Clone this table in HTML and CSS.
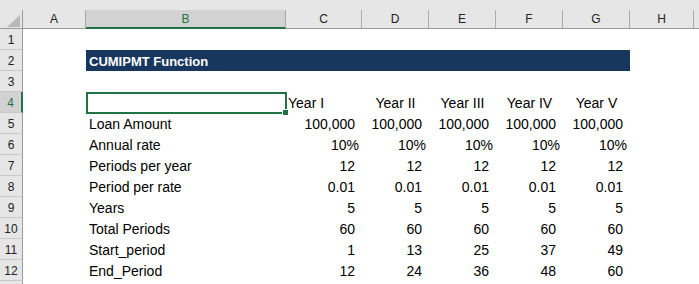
FILE: index.html
```html
<!DOCTYPE html>
<html>
<head>
<meta charset="utf-8">
<link rel="stylesheet" href="styles.css">
</head>
<body>
<div class="sheet">
  <div class="r hdr">
    <div class="ch corner"><span class="tri"></span></div>
    <div class="ch">A</div>
    <div class="ch sel">B</div>
    <div class="ch">C</div>
    <div class="ch">D</div>
    <div class="ch">E</div>
    <div class="ch">F</div>
    <div class="ch">G</div>
    <div class="ch">H</div>
    <div class="ch rest"></div>
  </div>

  <div class="r"><div class="rh">1</div></div>

  <div class="r"><div class="rh">2</div><div></div><div class="title">CUMIPMT Function</div></div>

  <div class="r"><div class="rh">3</div></div>

  <div class="r">
    <div class="rh rsel">4</div><div></div>
    <div class="c active"><span class="box"></span><span class="handle"></span></div>
    <div class="c l">Year I</div>
    <div class="c m">Year II</div>
    <div class="c m">Year III</div>
    <div class="c m">Year IV</div>
    <div class="c m">Year V</div>
  </div>

  <div class="r">
    <div class="rh">5</div><div></div><div class="c lab">Loan Amount</div>
    <div class="c n">100,000</div><div class="c n">100,000</div><div class="c n">100,000</div><div class="c n">100,000</div><div class="c n">100,000</div>
  </div>

  <div class="r">
    <div class="rh">6</div><div></div><div class="c lab">Annual rate</div>
    <div class="c p">10%</div><div class="c p">10%</div><div class="c p">10%</div><div class="c p">10%</div><div class="c p">10%</div>
  </div>

  <div class="r">
    <div class="rh">7</div><div></div><div class="c lab">Periods per year</div>
    <div class="c n">12</div><div class="c n">12</div><div class="c n">12</div><div class="c n">12</div><div class="c n">12</div>
  </div>

  <div class="r">
    <div class="rh">8</div><div></div><div class="c lab">Period per rate</div>
    <div class="c n">0.01</div><div class="c n">0.01</div><div class="c n">0.01</div><div class="c n">0.01</div><div class="c n">0.01</div>
  </div>

  <div class="r">
    <div class="rh">9</div><div></div><div class="c lab">Years</div>
    <div class="c n">5</div><div class="c n">5</div><div class="c n">5</div><div class="c n">5</div><div class="c n">5</div>
  </div>

  <div class="r">
    <div class="rh">10</div><div></div><div class="c lab">Total Periods</div>
    <div class="c n">60</div><div class="c n">60</div><div class="c n">60</div><div class="c n">60</div><div class="c n">60</div>
  </div>

  <div class="r">
    <div class="rh">11</div><div></div><div class="c lab">Start_period</div>
    <div class="c n">1</div><div class="c n">13</div><div class="c n">25</div><div class="c n">37</div><div class="c n">49</div>
  </div>

  <div class="r">
    <div class="rh">12</div><div></div><div class="c lab">End_Period</div>
    <div class="c n">12</div><div class="c n">24</div><div class="c n">36</div><div class="c n">48</div><div class="c n">60</div>
  </div>

  <div class="r"><div class="rh"></div></div>
</div>
</body>
</html>
```

FILE: styles.css
```css
html, body {
  margin: 0;
  padding: 0;
  background: #ffffff;
}

.sheet {
  width: 699px;
  height: 284px;
  overflow: hidden;
  font-family: "Liberation Sans", Arial, sans-serif;
  color: #000000;
}

.r {
  display: grid;
  grid-template-columns: 23px 63px 200px 76px 67px 67px 67px 67px 64px 1fr;
  height: 21px;
}

.hdr {
  height: 29px;
  padding-top: 10px;
  box-sizing: border-box;
  background: #e6e6e6;
}

.ch {
  box-sizing: border-box;
  height: 19px;
  border-right: 1px solid #ababab;
  border-bottom: 1px solid #9b9b9b;
  text-align: center;
  font-size: 12px;
  line-height: 19px;
  color: #222222;
}

.ch.corner {
  position: relative;
  border-right-color: #9b9b9b;
}

.tri {
  position: absolute;
  left: 7px;
  top: 5px;
  width: 13px;
  height: 12px;
  background: #b9b9b9;
  clip-path: polygon(100% 0, 100% 100%, 0 100%);
}

.ch.sel {
  background: #d2d2d2;
  border-bottom: 2px solid #217346;
  line-height: 18px;
  color: #217346;
}

.ch.rest {
  border-right: none;
}

.rh {
  box-sizing: border-box;
  height: 21px;
  background: #e6e6e6;
  border-right: 1px solid #9b9b9b;
  border-bottom: 1px solid #c8c8c8;
  text-align: center;
  font-size: 12px;
  line-height: 19px;
  padding-top: 2px;
  color: #222222;
}

.rh.rsel {
  background: #d2d2d2;
  border-right: 2px solid #217346;
  color: #217346;
}

.title {
  grid-column: 3 / 9;
  background: #17375e;
  color: #ffffff;
  font-weight: bold;
  font-size: 13px;
  line-height: 19px;
  padding: 2px 0 0 3px;
  white-space: nowrap;
}

.c {
  box-sizing: border-box;
  font-size: 14px;
  line-height: 20px;
  padding-top: 1px;
  height: 21px;
  white-space: nowrap;
}

.c.lab {
  padding-left: 3px;
}

.c.l {
  padding-left: 2px;
}

.c.m {
  text-align: center;
}

.c.n {
  text-align: right;
  padding-right: 7px;
}

.c.p {
  text-align: right;
  padding-right: 3px;
}

.c.active {
  position: relative;
}

.box {
  position: absolute;
  left: 0;
  top: 0;
  width: 201px;
  height: 22px;
  box-sizing: border-box;
  border: 2px solid #217346;
}

.handle {
  position: absolute;
  left: 196px;
  top: 17px;
  width: 7px;
  height: 7px;
  box-sizing: border-box;
  background: #217346;
  border: 1px solid #ffffff;
}
```
